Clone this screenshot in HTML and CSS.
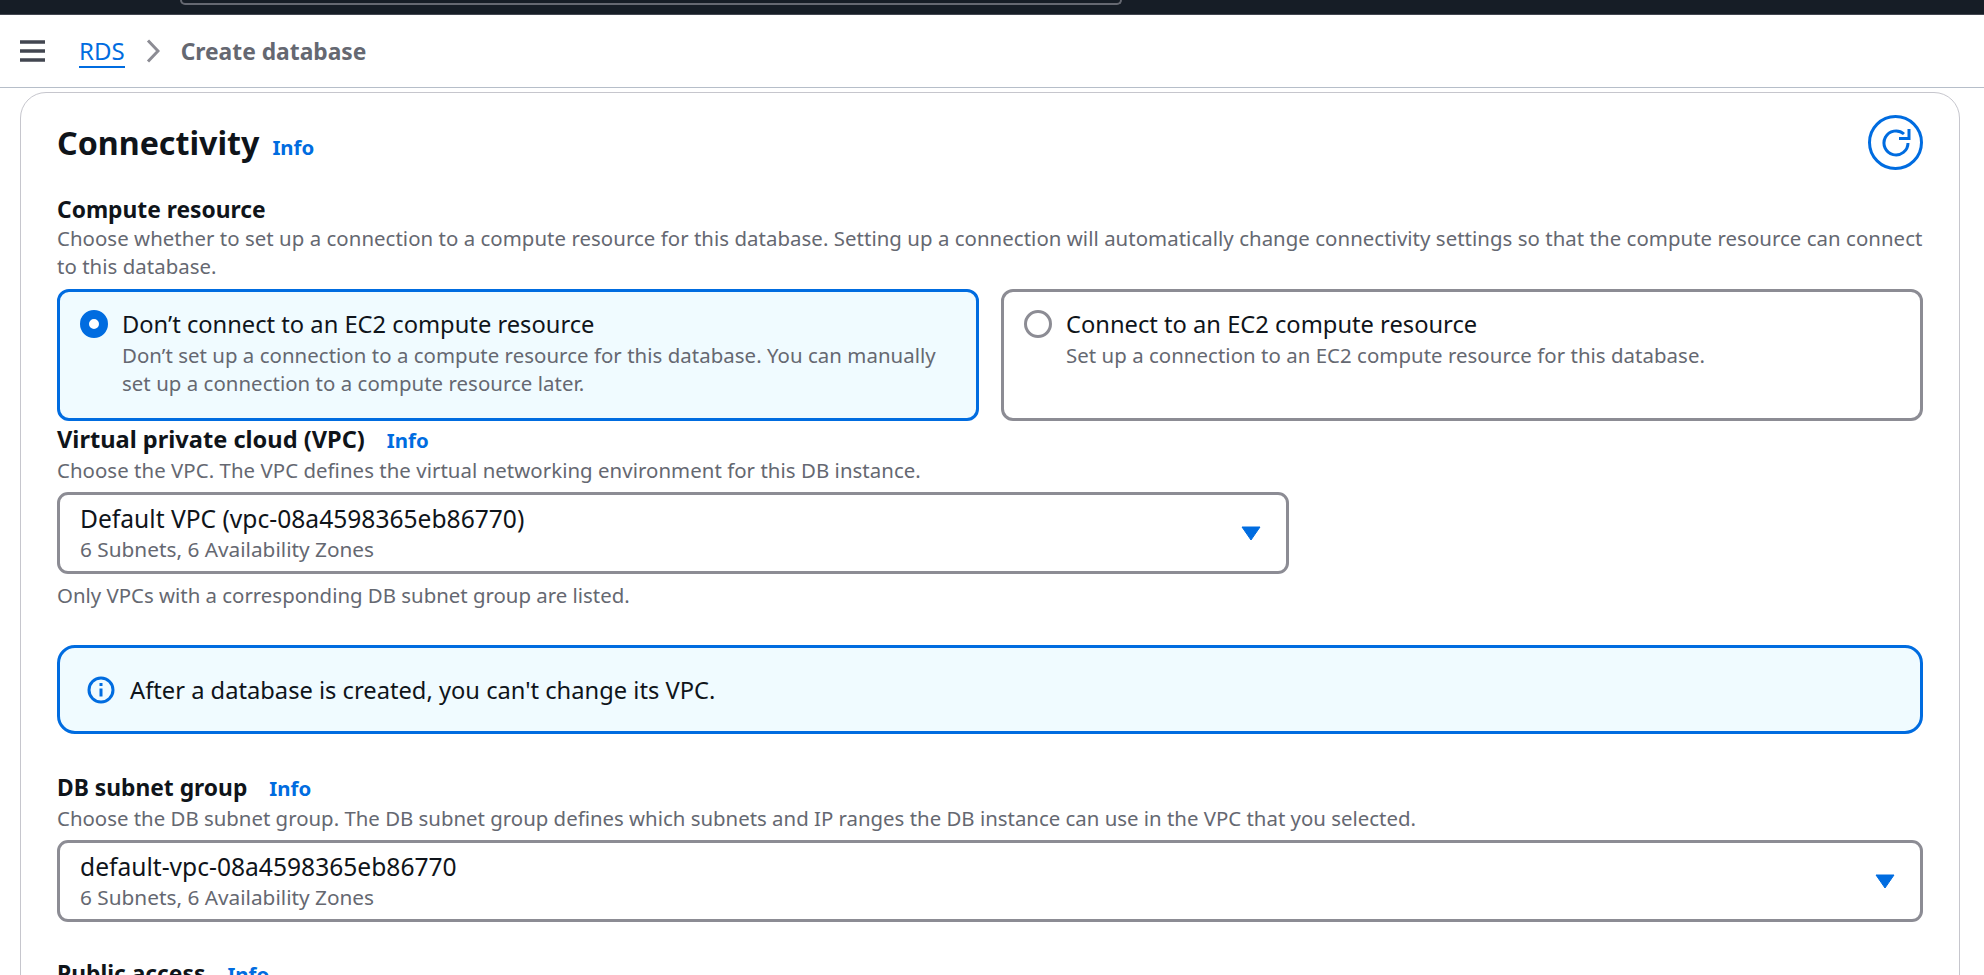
FILE: index.html
```html
<!DOCTYPE html>
<html lang="en">
<head>
    <meta charset="UTF-8">
    <title>Create database</title>
    <link rel="stylesheet" href="styles.css">
</head>
<body>
    <div class="top-bar"><div class="top-search"></div></div>

    <div class="crumb-bar">
        <svg class="menu-icon" width="25" height="22" viewBox="0 0 25 22"><path d="M0 2h25M0 11h25M0 20h25" stroke="#424650" stroke-width="3.4" fill="none"/></svg>
        <a class="crumb-link">RDS</a>
        <svg class="crumb-sep" width="14" height="24" viewBox="0 0 14 24"><path d="M2 1.5L12 12 2 22.5" stroke="#8c8c94" stroke-width="3" fill="none"/></svg>
        <span class="crumb-current">Create database</span>
    </div>

    <div class="card">
        <div class="card-head">
            <h1>Connectivity</h1>
            <a class="info info-head">Info</a>
            <button class="refresh">
                <svg width="30" height="30" viewBox="0 0 30 30"><path d="M27 15a12 12 0 1 1-4-9" stroke="#006ce0" stroke-width="3" fill="none"/><path d="M28 1v9.5h-10" stroke="#006ce0" stroke-width="3" fill="none"/></svg>
            </button>
        </div>

        <div class="label label-first">Compute resource</div>
        <p class="desc desc-wide">Choose whether to set up a connection to a compute resource for this database. Setting up a connection will automatically change connectivity settings so that the compute resource can connect to this database.</p>

        <div class="tiles">
            <div class="tile tile-on">
                <span class="radio radio-on"></span>
                <div>
                    <div class="tile-title">Don’t connect to an EC2 compute resource</div>
                    <p class="desc desc-wide">Don’t set up a connection to a compute resource for this database. You can manually set up a connection to a compute resource later.</p>
                </div>
            </div>
            <div class="tile">
                <span class="radio"></span>
                <div>
                    <div class="tile-title">Connect to an EC2 compute resource</div>
                    <p class="desc desc-wide">Set up a connection to an EC2 compute resource for this database.</p>
                </div>
            </div>
        </div>

        <div class="label label-vpc">Virtual private cloud (VPC)<a class="info">Info</a></div>
        <p class="desc desc-wide">Choose the VPC. The VPC defines the virtual networking environment for this DB instance.</p>
        <div class="select select-vpc">
            <div>
                <div class="select-value">Default VPC (vpc-08a4598365eb86770)</div>
                <div class="select-sub">6 Subnets, 6 Availability Zones</div>
            </div>
            <svg class="caret" width="20" height="15" viewBox="0 0 20 15"><path d="M1 1h18L10 14z" fill="#006ce0" stroke="#006ce0" stroke-linejoin="round"/></svg>
        </div>
        <p class="desc hint">Only VPCs with a corresponding DB subnet group are listed.</p>

        <div class="alert">
            <svg width="28" height="28" viewBox="0 0 28 28"><circle cx="14" cy="14" r="12" stroke="#006ce0" stroke-width="3" fill="none"/><path d="M14 12.5v8" stroke="#006ce0" stroke-width="3"/><path d="M14 7v3" stroke="#006ce0" stroke-width="3"/></svg>
            <span>After a database is created, you can't change its VPC.</span>
        </div>

        <div class="label label-subnet">DB subnet group<a class="info">Info</a></div>
        <p class="desc">Choose the DB subnet group. The DB subnet group defines which subnets and IP ranges the DB instance can use in the VPC that you selected.</p>
        <div class="select">
            <div>
                <div class="select-value">default-vpc-08a4598365eb86770</div>
                <div class="select-sub">6 Subnets, 6 Availability Zones</div>
            </div>
            <svg class="caret" width="20" height="15" viewBox="0 0 20 15"><path d="M1 1h18L10 14z" fill="#006ce0" stroke="#006ce0" stroke-linejoin="round"/></svg>
        </div>

        <div class="label label-public">Public access<a class="info">Info</a></div>
    </div>
</body>
</html>
```

FILE: styles.css
```css
/* page */
html, body {
    height: 100%;
    overflow: hidden;
}

body {
    margin: 0;
    background-color: #fff;
    color: #0f141a;
    font-family: "Noto Sans", Arial, sans-serif;
    font-size: 20.4px;
    line-height: 28px;
}

p {
    margin: 0;
}

/* top nav strip */
.top-bar {
    height: 14px;
    background-color: #161d26;
    border-bottom: 1px solid #424650;
    padding-left: 180px;
}

.top-search {
    width: 938px;
    height: 3px;
    border: 2px solid #656871;
    border-top: none;
    border-radius: 0 0 8px 8px;
}

/* breadcrumbs */
.crumb-bar {
    height: 72px;
    border-bottom: 1px solid #b6bec9;
    display: flex;
    align-items: center;
    padding-left: 20px;
}

.menu-icon {
    margin-right: 34px;
}

.crumb-link {
    color: #006ce0;
    font-size: 24px;
    line-height: 30px;
    border-bottom: 2px solid #006ce0;
    margin-top: 2px;
}

.crumb-sep {
    margin: 0 21px;
}

.crumb-current {
    color: #656871;
    font-size: 22.8px;
    font-weight: 700;
    margin-top: 2px;
}

/* main card */
.card {
    margin: 4px 24px 0 20px;
    padding: 22px 36px 0;
    height: 900px;
    border: 1px solid #c6c6cd;
    border-radius: 26px;
}

.card-head {
    display: flex;
    align-items: center;
    height: 55px;
}

h1 {
    margin: 0;
    font-size: 32.2px;
    line-height: 40px;
    font-weight: 700;
}

.info {
    color: #006ce0;
    font-weight: 700;
    font-size: 20.4px;
    margin-left: 22px;
}

.info-head {
    margin-left: 13px;
    margin-top: 8px;
}

.refresh {
    margin-left: auto;
    width: 55px;
    height: 55px;
    padding: 0;
    background: #fff;
    border: 3px solid #006ce0;
    border-radius: 50%;
    display: flex;
    align-items: center;
    justify-content: center;
}

.label {
    font-size: 22.8px;
    font-weight: 700;
    line-height: 28px;
}

.label-first {
    margin-top: 26px;
}

.label-vpc {
    margin-top: 4px;
    margin-bottom: 2px;
    font-size: 23.6px;
}

.label-subnet {
    margin-top: 40px;
    margin-bottom: 2px;
}

.label-public {
    margin-top: 38px;
}

.desc {
    color: #656871;
}

.desc-wide {
    letter-spacing: 0.05px;
}

/* radio tiles */
.tiles {
    display: grid;
    grid-template-columns: 1fr 1fr;
    gap: 22px;
    margin-top: 9px;
}

.tile {
    display: flex;
    gap: 14px;
    height: 132px;
    box-sizing: border-box;
    padding: 18px 24px 0 20px;
    border: 3px solid #8c8c94;
    border-radius: 12px;
}

.tile-on {
    background-color: #f0fbff;
    border-color: #006ce0;
}

.tile-title {
    font-size: 23.7px;
    margin-bottom: 3px;
}

.radio {
    flex: none;
    width: 28px;
    height: 28px;
    box-sizing: border-box;
    border: 3px solid #8c8c94;
    border-radius: 50%;
    background-color: #fff;
}

.radio-on {
    border: 9px solid #006ce0;
}

/* selects */
.select {
    display: flex;
    align-items: center;
    justify-content: space-between;
    box-sizing: border-box;
    height: 82px;
    margin-top: 8px;
    padding: 0 25px 0 20px;
    border: 3px solid #8c8c94;
    border-radius: 11px;
}

.select-vpc {
    width: 1232px;
}

.select-value {
    font-size: 24.6px;
    line-height: 32px;
}

.select-sub {
    color: #656871;
    font-size: 20.8px;
    line-height: 28px;
}

.hint {
    margin-top: 7px;
}

/* info alert */
.alert {
    display: flex;
    align-items: center;
    gap: 15px;
    box-sizing: border-box;
    height: 89px;
    margin-top: 36px;
    padding-left: 27px;
    background-color: #f0fbff;
    border: 3px solid #006ce0;
    border-radius: 18px;
    font-size: 23.7px;
}
```
